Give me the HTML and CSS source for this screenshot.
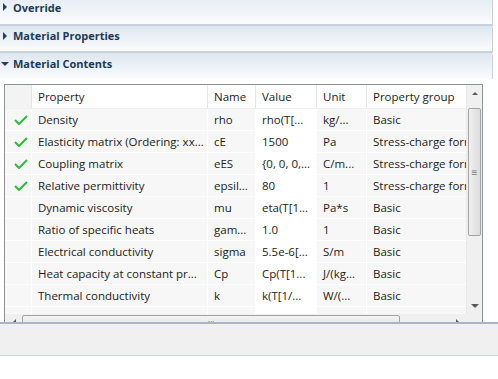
FILE: index.html
```html
<!DOCTYPE html>
<html lang="en">
<head>
    <meta charset="UTF-8">
    <title>Material Contents</title>
    <link rel="stylesheet" href="styles.css">
</head>
<body>
    <!-- collapsible section headers -->
    <div class="section section-first">
        <span class="arrow arrow-right"></span>
        <span class="section-title">Override</span>
    </div>
    <div class="section">
        <span class="arrow arrow-right"></span>
        <span class="section-title">Material Properties</span>
    </div>
    <div class="section section-open">
        <span class="arrow arrow-down"></span>
        <span class="section-title">Material Contents</span>
    </div>

    <div class="table-area">
        <div class="grid-box">
            <div class="grid-main">
                <table class="grid">
                    <colgroup>
                        <col class="c-check">
                        <col class="c-prop">
                        <col class="c-name">
                        <col class="c-value">
                        <col class="c-unit">
                        <col class="c-group">
                    </colgroup>
                    <thead>
                        <tr>
                            <th class="check"></th>
                            <th>Property</th>
                            <th>Name</th>
                            <th>Value</th>
                            <th>Unit</th>
                            <th>Property group</th>
                        </tr>
                    </thead>
                    <tbody>
                        <tr>
                            <td class="check"><svg width="14" height="10" viewBox="0 0 14 10"><polyline points="1,5 5,9 13,1" fill="none" stroke="#2fba3a" stroke-width="2"/></svg></td>
                            <td>Density</td><td>rho</td><td class="value">rho(T[...</td><td>kg/...</td><td>Basic</td>
                        </tr>
                        <tr>
                            <td class="check"><svg width="14" height="10" viewBox="0 0 14 10"><polyline points="1,5 5,9 13,1" fill="none" stroke="#2fba3a" stroke-width="2"/></svg></td>
                            <td>Elasticity matrix (Ordering: xx...</td><td>cE</td><td class="value">1500</td><td>Pa</td><td>Stress-charge forr</td>
                        </tr>
                        <tr>
                            <td class="check"><svg width="14" height="10" viewBox="0 0 14 10"><polyline points="1,5 5,9 13,1" fill="none" stroke="#2fba3a" stroke-width="2"/></svg></td>
                            <td>Coupling matrix</td><td>eES</td><td class="value">{0, 0, 0,...</td><td>C/m...</td><td>Stress-charge forr</td>
                        </tr>
                        <tr>
                            <td class="check"><svg width="14" height="10" viewBox="0 0 14 10"><polyline points="1,5 5,9 13,1" fill="none" stroke="#2fba3a" stroke-width="2"/></svg></td>
                            <td>Relative permittivity</td><td>epsil...</td><td class="value">80</td><td>1</td><td>Stress-charge forr</td>
                        </tr>
                        <tr>
                            <td class="check"></td>
                            <td>Dynamic viscosity</td><td>mu</td><td class="value">eta(T[1...</td><td>Pa*s</td><td>Basic</td>
                        </tr>
                        <tr>
                            <td class="check"></td>
                            <td>Ratio of specific heats</td><td>gam...</td><td class="value">1.0</td><td>1</td><td>Basic</td>
                        </tr>
                        <tr>
                            <td class="check"></td>
                            <td>Electrical conductivity</td><td>sigma</td><td class="value">5.5e-6[...</td><td>S/m</td><td>Basic</td>
                        </tr>
                        <tr>
                            <td class="check"></td>
                            <td>Heat capacity at constant pr...</td><td>Cp</td><td class="value">Cp(T[1...</td><td>J/(kg...</td><td>Basic</td>
                        </tr>
                        <tr>
                            <td class="check"></td>
                            <td>Thermal conductivity</td><td>k</td><td class="value">k(T[1/...</td><td>W/(...</td><td>Basic</td>
                        </tr>
                        <tr>
                            <td class="check"></td>
                            <td>Speed of sound</td><td>c</td><td class="value">cs(T[1/...</td><td>m/s</td><td>Basic</td>
                        </tr>
                    </tbody>
                </table>
                <div class="vscroll">
                    <div class="sb-btn"><span class="tri tri-up"></span></div>
                    <div class="vtrack">
                        <div class="vthumb"><span class="grip">&#8801;</span></div>
                    </div>
                    <div class="sb-btn"><span class="tri tri-down"></span></div>
                </div>
            </div>
            <div class="hscroll-row">
                <div class="hscroll">
                    <div class="sb-btn-h"><span class="tri tri-left"></span></div>
                    <div class="hthumb"><span class="grip-h">III</span></div>
                    <div class="htrack"></div>
                    <div class="sb-btn-h"><span class="tri tri-right"></span></div>
                </div>
                <div class="corner"></div>
            </div>
        </div>
    </div>

    <div class="status-panel"></div>
</body>
</html>
```

FILE: styles.css
```css
body {
    margin: 0;
    background-color: #ffffff;
    font-family: "Open Sans", "Liberation Sans", sans-serif;
    font-size: 11.5px;
    color: #1b1b1b;
    width: 498px;
    height: 379px;
    overflow: hidden;
}

/* section headers */
.section {
    display: flex;
    align-items: center;
    height: 27px;
    width: 493px;
    padding-bottom: 6px;
    border-bottom: 2px solid #c9d1d9;
    border-right: 1px solid #c9d1d9;
    border-top-right-radius: 3px;
    background-image: linear-gradient(to bottom, #dde6f0, #fbfcfd);
    box-sizing: border-box;
    margin-bottom: 0;
}

.section-first {
    margin-top: -12px;
    height: 38px;
    padding-top: 2px;
    padding-bottom: 0;
}

.section-open {
    border-bottom: none;
    height: 26px;
    padding-bottom: 5px;
    margin-bottom: 5px;
}

.section-title {
    font-weight: bold;
    font-size: 11px;
    color: #20395b;
    margin-left: 6px;
}

.arrow {
    display: inline-block;
    width: 0;
    height: 0;
    margin-left: 3px;
}

.arrow-right {
    border-top: 4px solid transparent;
    border-bottom: 4px solid transparent;
    border-left: 4px solid #253f60;
}

.arrow-down {
    margin-left: 1px;
    border-left: 4px solid transparent;
    border-right: 4px solid transparent;
    border-top: 4px solid #253f60;
    margin-right: -2px;
}

/* table area */
.table-area {
    padding-left: 4px;
}

.grid-box {
    width: 479px;
    height: 238px;
    border: 1px solid #8d9299;
    border-bottom: none;
    box-sizing: border-box;
    overflow: hidden;
    background-color: #ffffff;
}

.grid-main {
    display: flex;
    height: 229px;
    overflow: hidden;
}

.grid {
    border-collapse: separate;
    border-spacing: 0;
    table-layout: fixed;
    width: 461px;
    align-self: flex-start;
}

.c-check { width: 26px; }
.c-prop { width: 176px; }
.c-name { width: 48px; }
.c-value { width: 61px; }
.c-unit { width: 50px; }
.c-group { width: 100px; }

.grid th {
    height: 23px;
    line-height: 23px;
    font-weight: normal;
    text-align: left;
    padding: 0 0 0 6px;
    background-color: #ffffff;
    border-left: 1px solid #e6e6e6;
    border-bottom: 1px solid #f0f0f0;
    white-space: nowrap;
    overflow: hidden;
}

.grid th.check {
    background-color: #f3f3f3;
    border-left: none;
}

.grid td {
    height: 21px;
    line-height: 21px;
    padding: 0 0 0 6px;
    background-color: #f7f7f7;
    border-left: 1px solid #ffffff;
    border-bottom: 1px solid #ffffff;
    white-space: nowrap;
    overflow: hidden;
}

.grid td.check {
    border-left: none;
    padding: 0 0 0 9px;
}

.grid td.check svg {
    display: block;
}

.grid td.value {
    background-color: #ffffff;
}

/* vertical scrollbar */
.vscroll {
    width: 16px;
    display: flex;
    flex-direction: column;
    background-color: #f0f0f0;
    border-left: 1px solid #e8e8e8;
}

.sb-btn {
    height: 17px;
    display: flex;
    align-items: center;
    justify-content: center;
}

.vtrack {
    flex: 1;
    padding: 6px 1px 0 1px;
}

.vthumb {
    height: 126px;
    border: 1px solid #a4a4a4;
    border-radius: 2px;
    background-image: linear-gradient(to right, #f0f0f0, #dcdcdc);
    display: flex;
    align-items: center;
    justify-content: center;
}

.grip {
    font-size: 10px;
    color: #777777;
    line-height: 1;
}

.tri {
    display: inline-block;
    width: 0;
    height: 0;
}

.tri-up {
    border-left: 3px solid transparent;
    border-right: 3px solid transparent;
    border-bottom: 3px solid #5a5a5a;
}

.tri-down {
    border-left: 4px solid transparent;
    border-right: 4px solid transparent;
    border-top: 4px solid #5a5a5a;
}

.tri-left {
    border-top: 4px solid transparent;
    border-bottom: 4px solid transparent;
    border-right: 4px solid #5a5a5a;
}

.tri-right {
    border-top: 4px solid transparent;
    border-bottom: 4px solid transparent;
    border-left: 4px solid #5a5a5a;
}

/* horizontal scrollbar */
.hscroll-row {
    display: flex;
    height: 17px;
}

.hscroll {
    width: 461px;
    display: flex;
    background-color: #f0f0f0;
}

.sb-btn-h {
    width: 17px;
    display: flex;
    align-items: center;
    justify-content: center;
}

.hthumb {
    width: 376px;
    margin-top: 1px;
    border: 1px solid #a4a4a4;
    border-radius: 2px;
    background-image: linear-gradient(to bottom, #f4f4f4, #dcdcdc);
    display: flex;
    justify-content: center;
}

.grip-h {
    font-size: 8px;
    color: #666666;
    margin-top: 1px;
}

.htrack {
    flex: 1;
}

.corner {
    flex: 1;
    background-color: #f0f0f0;
}

/* bottom panel */
.status-panel {
    height: 31px;
    background-color: #f0f0f0;
    border-top: 2px solid #a6b6c8;
    border-bottom: 1px solid #c4d4e4;
}
```
